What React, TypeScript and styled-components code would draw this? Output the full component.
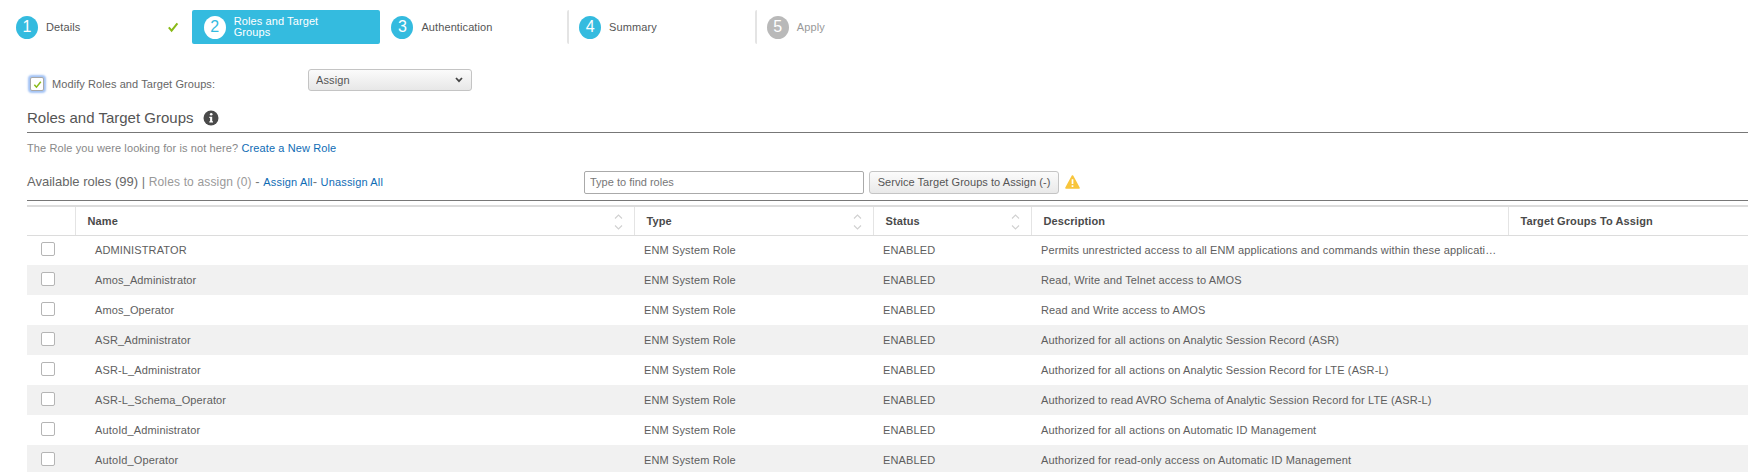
import styled, { createGlobalStyle } from 'styled-components';

type Step = {
  number: number;
  label: string;
  state?: 'active' | 'disabled';
  done?: boolean;
  divider?: boolean;
};

const STEPS: Step[] = [
  { number: 1, label: 'Details', done: true },
  { number: 2, label: 'Roles and Target Groups', state: 'active' },
  { number: 3, label: 'Authentication' },
  { number: 4, label: 'Summary', divider: true },
  { number: 5, label: 'Apply', state: 'disabled', divider: true },
];

const ROLES = [
  ['ADMINISTRATOR', 'Permits unrestricted access to all ENM applications and commands within these applications'],
  ['Amos_Administrator', 'Read, Write and Telnet access to AMOS'],
  ['Amos_Operator', 'Read and Write access to AMOS'],
  ['ASR_Administrator', 'Authorized for all actions on Analytic Session Record (ASR)'],
  ['ASR-L_Administrator', 'Authorized for all actions on Analytic Session Record for LTE (ASR-L)'],
  ['ASR-L_Schema_Operator', 'Authorized to read AVRO Schema of Analytic Session Record for LTE (ASR-L)'],
  ['AutoId_Administrator', 'Authorized for all actions on Automatic ID Management'],
  ['AutoId_Operator', 'Authorized for read-only access on Automatic ID Management'],
];

const COLUMNS = [
  { title: 'Name', width: 559, sortable: true },
  { title: 'Type', width: 239, sortable: true },
  { title: 'Status', width: 158, sortable: true },
  { title: 'Description', width: 477, sortable: false },
  { title: 'Target Groups To Assign', width: 240, sortable: false },
];

const Check = ({ size }: { size: number }) => (
  <svg width={size} height={size} viewBox="0 0 12 12" aria-hidden="true">
    <path d="M1.8 6.4 L4.6 9.6 L10.4 2.4" fill="none" stroke="#89ba17" strokeWidth="2" />
  </svg>
);

const SortCarets = () => (
  <Carets width="9" height="16" viewBox="0 0 9 16" aria-hidden="true">
    <path d="M1 4.5 L4.5 1 L8 4.5 M1 11.5 L4.5 15 L8 11.5" fill="none" stroke="#d0d0d0" strokeWidth="1.1" />
  </Carets>
);

const App = () => {
  return (
    <>
      <GlobalStyle />
      <Wizard>
        {STEPS.map((step) => (
          <WizardStep key={step.number} $state={step.state} $divider={step.divider}>
            <StepNumber $state={step.state}>{step.number}</StepNumber>
            <StepLabel $state={step.state}>{step.label}</StepLabel>
            {step.done && (
              <StepDone>
                <Check size={12} />
              </StepDone>
            )}
          </WizardStep>
        ))}
      </Wizard>

      <Content>
        <ModifyRow>
          <ModifyLabel>
            <FocusedCheckbox>
              <Check size={9} />
            </FocusedCheckbox>
            Modify Roles and Target Groups:
          </ModifyLabel>
          <SelectWrap>
            <Select defaultValue="Assign">
              <option>Assign</option>
            </Select>
            <SelectChevron width="8" height="6" viewBox="0 0 8 6" aria-hidden="true">
              <path d="M1 1 L4 4.2 L7 1" fill="none" stroke="#444" strokeWidth="1.7" />
            </SelectChevron>
          </SelectWrap>
        </ModifyRow>

        <SectionHeading>
          <SectionTitle>Roles and Target Groups</SectionTitle>
          <svg width="16" height="16" viewBox="0 0 16 16" aria-label="info">
            <circle cx="8" cy="8" r="7.5" fill="#4a4a4a" />
            <circle cx="8.2" cy="4.2" r="1.3" fill="#fff" />
            <path d="M6.3 6.8 H9.2 V11.3 H10 V12.6 H6.3 V11.3 H7.1 V8.1 H6.3 Z" fill="#fff" />
          </svg>
        </SectionHeading>

        <Hint>
          The Role you were looking for is not here? <Link href="#">Create a New Role</Link>
        </Hint>

        <Toolbar>
          <Counts>
            <Available>Available roles (99)</Available> | <ToAssign>Roles to assign (0)</ToAssign> -{' '}
            <SmallLink href="#">Assign All</SmallLink>- <SmallLink href="#">Unassign All</SmallLink>
          </Counts>
          <SearchInput placeholder="Type to find roles" />
          <ServiceButton>Service Target Groups to Assign (-)</ServiceButton>
          <svg width="15" height="14" viewBox="0 0 15 14" aria-label="warning">
            <path d="M7.5 1 L14 13 H1 Z" fill="#f8c53c" stroke="#f8c53c" strokeWidth="1.6" strokeLinejoin="round" />
            <path d="M7.5 4.2 V9 M7.5 10.2 V12" stroke="#fff" strokeWidth="1.7" />
          </svg>
        </Toolbar>

        <RolesTable>
          <colgroup>
            <col style={{ width: 48 }} />
            {COLUMNS.map((column) => (
              <col key={column.title} style={{ width: column.width }} />
            ))}
          </colgroup>
          <thead>
            <tr>
              <HeadCell />
              {COLUMNS.map((column) => (
                <HeadCell key={column.title}>
                  {column.title}
                  {column.sortable && <SortCarets />}
                </HeadCell>
              ))}
            </tr>
          </thead>
          <tbody>
            {ROLES.map(([name, description]) => (
              <Row key={name}>
                <CheckCell>
                  <RowCheckbox type="checkbox" readOnly />
                </CheckCell>
                <NameCell>{name}</NameCell>
                <Cell>ENM System Role</Cell>
                <Cell>ENABLED</Cell>
                <Cell>{description}</Cell>
                <Cell />
              </Row>
            ))}
          </tbody>
        </RolesTable>
      </Content>
    </>
  );
};

export default App;

const GlobalStyle = createGlobalStyle`
  html, body {
    margin: 0;
    height: 472px;
    overflow: hidden;
    background: #fff;
    font-family: "Liberation Sans", Arial, sans-serif;
    font-size: 12px;
    color: #333;
  }
`;

const Wizard = styled.div`
  display: flex;
  padding: 10px 0 0 4px;
`;

const WizardStep = styled.div<{ $state?: string; $divider?: boolean }>`
  position: relative;
  box-sizing: border-box;
  width: ${(p) => (p.$state === 'active' ? '188.4px' : '187.7px')};
  margin-right: ${(p) => (p.$state === 'active' ? '-0.7px' : '0')};
  height: 34px;
  display: flex;
  align-items: center;
  gap: 8px;
  padding-left: ${(p) => (p.$divider ? '10px' : '12px')};
  border-radius: 2px;
  border-left: ${(p) => (p.$divider ? '2px solid #e4e4e4' : 'none')};
  background: ${(p) => (p.$state === 'active' ? '#34bbdf' : 'transparent')};
`;

const StepNumber = styled.span<{ $state?: string }>`
  flex: none;
  width: 22px;
  height: 23px;
  border-radius: 50%;
  display: flex;
  align-items: center;
  justify-content: center;
  font-size: 16px;
  background: ${(p) =>
    p.$state === 'active' ? '#fff' : p.$state === 'disabled' ? '#b9b9b9' : '#34bbdf'};
  color: ${(p) => (p.$state === 'active' ? '#34bbdf' : '#fff')};
`;

const StepLabel = styled.span<{ $state?: string }>`
  font-size: 11px;
  line-height: 11px;
  letter-spacing: 0.1px;
  max-width: 100px;
  color: ${(p) =>
    p.$state === 'active' ? '#fff' : p.$state === 'disabled' ? '#999' : '#555'};
`;

const StepDone = styled.span`
  position: absolute;
  left: 163px;
  top: 11px;
  line-height: 0;
`;

const Content = styled.div`
  padding-left: 27px;
`;

const ModifyRow = styled.div`
  display: flex;
  align-items: flex-start;
  height: 22px;
  margin-top: 25px;
`;

const ModifyLabel = styled.label`
  width: 281px;
  margin-top: 8px;
  padding-left: 3px;
  display: flex;
  align-items: center;
  gap: 8px;
  box-sizing: border-box;
  font-size: 11px;
  letter-spacing: 0.08px;
  color: #666;
`;

const FocusedCheckbox = styled.span`
  width: 14px;
  height: 14px;
  box-sizing: border-box;
  display: flex;
  align-items: center;
  justify-content: center;
  background: #fff;
  border: 1px solid #a8a8a8;
  border-radius: 2px;
  box-shadow: 0 0 2px 2px #a3c3f5;
`;

const SelectWrap = styled.div`
  position: relative;
  width: 164px;
  height: 22px;
`;

const Select = styled.select`
  appearance: none;
  width: 100%;
  height: 100%;
  padding: 0 0 0 7px;
  border: 1px solid #c4c4c4;
  border-radius: 3px;
  background: linear-gradient(#fbfbfb, #e7e7e7);
  font-family: inherit;
  font-size: 11px;
  letter-spacing: 0.1px;
  color: #555;
`;

const SelectChevron = styled.svg`
  position: absolute;
  right: 9px;
  top: 8px;
  pointer-events: none;
`;

const SectionHeading = styled.div`
  display: flex;
  align-items: center;
  gap: 9px;
  height: 42px;
  box-sizing: border-box;
  border-bottom: 1px solid #777;
  padding-top: 12px;
`;

const SectionTitle = styled.h2`
  margin: 0;
  font-size: 15px;
  font-weight: normal;
  color: #555;
`;

const Hint = styled.p`
  margin: 8px 0 0;
  font-size: 11px;
  line-height: 14px;
  letter-spacing: 0.11px;
  color: #888;
`;

const Link = styled.a`
  color: #0f6cb5;
  text-decoration: none;
`;

const SmallLink = styled(Link)`
  font-size: 11px;
  letter-spacing: 0.16px;
`;

const Toolbar = styled.div`
  display: flex;
  align-items: center;
  height: 24px;
  margin-top: 15px;
  padding-bottom: 6px;
  border-bottom: 1px solid #777;
`;

const Counts = styled.div`
  width: 557px;
  padding-bottom: 2px;
  font-size: 13px;
  color: #777;
`;

const Available = styled.span`
  color: #666;
`;

const ToAssign = styled.span`
  font-size: 12px;
  letter-spacing: 0.16px;
  color: #999;
`;

const SearchInput = styled.input`
  box-sizing: border-box;
  width: 280px;
  height: 23px;
  padding: 0 5px;
  border: 1px solid #aaa;
  border-radius: 2px;
  font-family: inherit;
  font-size: 11px;

  &::placeholder {
    color: #777;
  }
`;

const ServiceButton = styled.button`
  box-sizing: border-box;
  width: 190px;
  height: 23px;
  margin: 0 6px 0 5px;
  padding: 0;
  border: 1px solid #c4c4c4;
  border-radius: 3px;
  background: linear-gradient(#fbfbfb, #e9e9e9);
  font-family: inherit;
  font-size: 11px;
  letter-spacing: 0.05px;
  color: #555;
`;

const RolesTable = styled.table`
  table-layout: fixed;
  width: 1721px;
  margin-top: 4px;
  border-collapse: collapse;
  border-top: 2px solid #dcdcdc;
`;

const HeadCell = styled.th`
  position: relative;
  height: 29px;
  padding: 0 0 0 12px;
  box-sizing: border-box;
  border-bottom: 1px solid #dcdcdc;
  border-right: 1px solid #e4e4e4;
  text-align: left;
  font-size: 11px;
  letter-spacing: 0.1px;
  font-weight: bold;
  color: #4a4a4a;
`;

const Carets = styled.svg`
  position: absolute;
  right: 11px;
  top: 7px;
`;

const Row = styled.tr`
  height: 30px;

  &:nth-child(even) {
    background: #f1f1f1;
  }
`;

const Cell = styled.td`
  padding: 0 9px 1px 10px;
  overflow: hidden;
  white-space: nowrap;
  text-overflow: ellipsis;
  font-size: 11px;
  letter-spacing: 0.13px;
  color: #5e5e5e;
`;

const NameCell = styled(Cell)`
  padding-left: 20px;
`;

const CheckCell = styled(Cell)`
  padding: 0 0 2px 14px;
`;

const RowCheckbox = styled.input`
  appearance: none;
  display: block;
  width: 14px;
  height: 14px;
  margin: 0;
  background: #fff;
  border: 1px solid #b5b5b5;
  border-radius: 2px;
`;
